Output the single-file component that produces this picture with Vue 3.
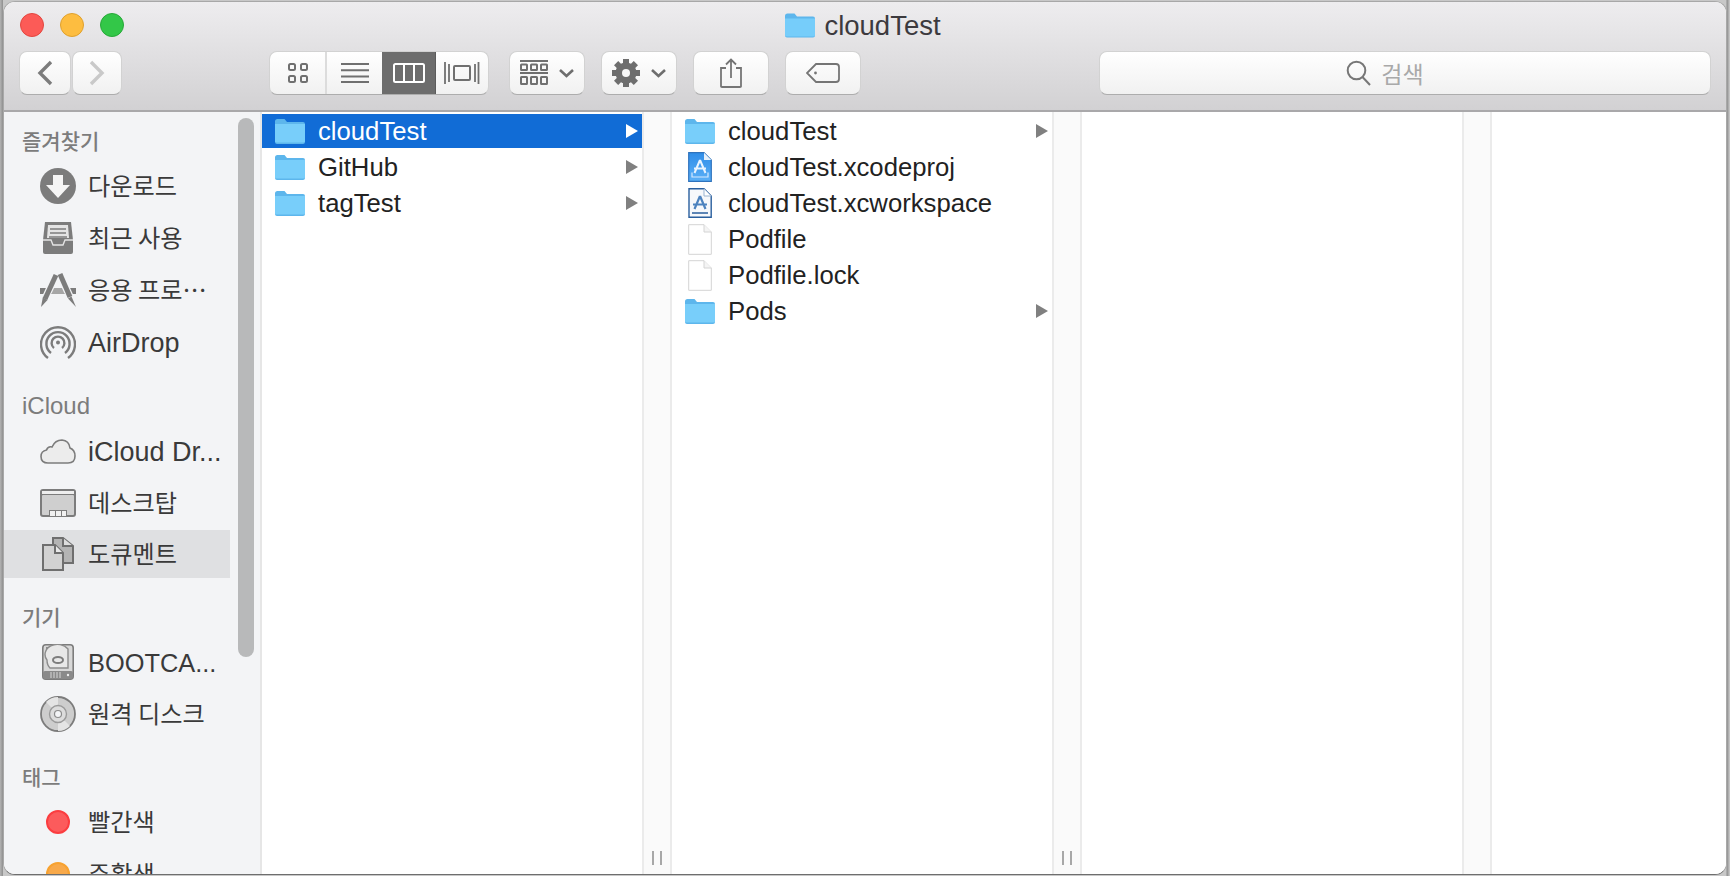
<script setup>
const sections = [
  { name: '즐겨찾기', cls: 'first', items: [
    { label: '다운로드', icon: 'download' },
    { label: '최근 사용', icon: 'recents' },
    { label: '응용 프로…', icon: 'apps' },
    { label: 'AirDrop', icon: 'airdrop' }
  ] },
  { name: 'iCloud', cls: 'cloud', items: [
    { label: 'iCloud Dr...', icon: 'cloud' },
    { label: '데스크탑', icon: 'desktop' },
    { label: '도큐멘트', icon: 'docs', active: true }
  ] },
  { name: '기기', cls: 'devices', items: [
    { label: 'BOOTCA...', icon: 'hdd', narrow: true },
    { label: '원격 디스크', icon: 'disc' }
  ] },
  { name: '태그', cls: 'tags', items: [
    { label: '빨간색', icon: 'red' },
    { label: '주황색', icon: 'orange' }
  ] }
]

const firstCol = [
  { name: 'cloudTest', icon: 'folder', more: true, selected: true },
  { name: 'GitHub', icon: 'folder', more: true },
  { name: 'tagTest', icon: 'folder', more: true }
]

const secondCol = [
  { name: 'cloudTest', icon: 'folder', more: true },
  { name: 'cloudTest.xcodeproj', icon: 'proj' },
  { name: 'cloudTest.xcworkspace', icon: 'work' },
  { name: 'Podfile', icon: 'file' },
  { name: 'Podfile.lock', icon: 'file' },
  { name: 'Pods', icon: 'folder', more: true }
]

const isKo = (s) => /[가-힣]/.test(s)
const teeth = [0, 45, 90, 135, 180, 225, 270, 315]
</script>

<template>
  <div class="desk">
    <div class="window">
      <header class="titlebar">
        <div class="title">
          <span class="lights"><i class="close"></i><i class="min"></i><i class="max"></i></span>
          <svg class="title-folder" width="30" height="25" viewBox="0 0 30 24">
            <path d="M0 2.5Q0 0 2.5 0H9.5L12 3H28Q30 3 30 5V22Q30 24 28 24H2Q0 24 0 22Z" fill="#5db6ec"/>
            <path d="M0 5H30V22Q30 23 28 23H2Q0 23 0 22Z" fill="#76cdfa"/>
          </svg>
          <span>cloudTest</span>
        </div>
        <div class="toolbar">
          <div class="nav">
            <button class="btn nav-btn back">
              <svg width="16" height="26" viewBox="0 0 16 26"><path d="M14 2L3 13L14 24" fill="none" stroke="#7c7c7c" stroke-width="3.4"/></svg>
            </button>
            <button class="btn nav-btn">
              <svg width="16" height="26" viewBox="0 0 16 26"><path d="M2 2L13 13L2 24" fill="none" stroke="#c9c9c9" stroke-width="3.4"/></svg>
            </button>
          </div>
          <div class="views btn">
            <div class="seg seg-a">
              <svg width="20" height="20" viewBox="0 0 20 20" fill="none" stroke="#707070" stroke-width="2">
                <rect x="1" y="1" width="6" height="6" rx="1.5"/><rect x="13" y="1" width="6" height="6" rx="1.5"/>
                <rect x="1" y="13" width="6" height="6" rx="1.5"/><rect x="13" y="13" width="6" height="6" rx="1.5"/>
              </svg>
            </div>
            <div class="seg seg-b">
              <svg width="28" height="20" viewBox="0 0 28 20" stroke="#707070" stroke-width="2"><path d="M0 1H28M0 7.3H28M0 13.6H28M0 19H28"/></svg>
            </div>
            <div class="seg seg-c">
              <svg width="32" height="20" viewBox="0 0 32 20" fill="none" stroke="#fff" stroke-width="2">
                <rect x="1" y="1" width="30" height="18" rx="1.5"/><path d="M11 1V19M21 1V19"/>
              </svg>
            </div>
            <div class="seg seg-d">
              <svg width="36" height="22" viewBox="0 0 36 22" fill="none" stroke="#707070" stroke-width="2">
                <rect x="10" y="4" width="16" height="14" rx="1"/>
                <path d="M1 0V22M34.500 0V22M5 2V20M31 2V20" stroke-width="1.800"/>
              </svg>
            </div>
          </div>
          <button class="btn tool">
            <svg width="28" height="26" viewBox="0 0 28 26" stroke="#707070" fill="none" stroke-width="2">
              <path d="M0 1H28M0 13H28"/>
              <rect x="1" y="4.500" width="6" height="5.500" rx=".5"/><rect x="11" y="4.500" width="6" height="5.500" rx=".5"/><rect x="21" y="4.500" width="6" height="5.500" rx=".5"/>
              <rect x="1" y="17" width="6" height="7" rx=".5"/><rect x="11" y="17" width="6" height="7" rx=".5"/><rect x="21" y="17" width="6" height="7" rx=".5"/>
            </svg>
            <svg class="chev" width="15" height="9" viewBox="0 0 15 9"><path d="M1 1L7.500 7L14 1" fill="none" stroke="#6e6e6e" stroke-width="2.600"/></svg>
          </button>
          <button class="btn tool">
            <svg width="28" height="28" viewBox="0 0 28 28">
              <g fill="#6e6e6e">
                <rect v-for="a in teeth" :key="a" x="11" y="0" width="6" height="6" :transform="`rotate(${a} 14 14)`"/>
                <circle cx="14" cy="14" r="10.500"/>
              </g>
              <circle cx="14" cy="14" r="4" fill="#f7f7f7"/>
            </svg>
            <svg class="chev" width="15" height="9" viewBox="0 0 15 9"><path d="M1 1L7.500 7L14 1" fill="none" stroke="#6e6e6e" stroke-width="2.600"/></svg>
          </button>
          <button class="btn tool">
            <svg width="24" height="30" viewBox="0 0 24 30" fill="none" stroke="#757575" stroke-width="1.800">
              <path d="M7 10H2V28.500Q2 29 3 29H21Q22 29 22 28.500V10H17"/>
              <path d="M12 20V1.500M7 6.500L12 1.500L17 6.500"/>
            </svg>
          </button>
          <button class="btn tool">
            <svg width="34" height="20" viewBox="0 0 34 20" fill="none" stroke="#757575" stroke-width="1.800">
              <path d="M10 1H30Q33 1 33 4V16Q33 19 30 19H10L1 10Z"/>
              <circle cx="9.500" cy="10" r="1.400" fill="#757575" stroke="none"/>
            </svg>
          </button>
          <div class="search btn">
            <svg width="26" height="26" viewBox="0 0 26 26" fill="none" stroke="#777" stroke-width="2">
              <circle cx="10.500" cy="10.500" r="8.800"/><path d="M16.500 17L24 25"/>
            </svg>
            <span>검색</span>
          </div>
        </div>
      </header>

      <div class="body">
        <aside class="sidebar">
          <div v-for="sec in sections" :key="sec.name" class="sec" :class="sec.cls">
            <div class="sec-name" :class="{ ko: isKo(sec.name) }">{{ sec.name }}</div>
            <div v-for="it in sec.items" :key="it.label" class="side-row" :class="{ active: it.active }">
              <span class="side-icon">
                <svg v-if="it.icon === 'download'" width="36" height="36" viewBox="0 0 36 36">
                  <circle cx="18" cy="18" r="18" fill="#7c7c7c"/>
                  <path d="M13 7H23V17H30L18 30L6 17H13Z" fill="#f5f5f5"/>
                </svg>
                <svg v-else-if="it.icon === 'recents'" width="32" height="32" viewBox="0 0 32 32">
                  <path d="M3 0H29L31 18V30Q31 32 29 32H3Q1 32 1 30V18Z" fill="#7c7c7c"/>
                  <path d="M6 3H26L27 16H5Z" fill="#e4e4e4"/>
                  <path d="M8 7H24M8 11H24M7 15H25" stroke="#7c7c7c" stroke-width="1.600"/>
                  <path d="M1 18H9L11 23H21L23 18H31" fill="none" stroke="#e4e4e4" stroke-width="1.400"/>
                </svg>
                <svg v-else-if="it.icon === 'apps'" width="36" height="34" viewBox="0 0 36 34">
                  <path d="M0 15H36V21H0Z" fill="#7c7c7c"/>
                  <path d="M12 15H24V21H12Z" fill="#a6a6a6"/>
                  <path d="M16 2L4 28" stroke="#f3f4f6" stroke-width="7.500"/>
                  <path d="M20 2L32 28" stroke="#f3f4f6" stroke-width="7.500"/>
                  <path d="M16 2L5 26" stroke="#7c7c7c" stroke-width="5"/>
                  <path d="M2.800 24.500L7.500 27L1 34Z" fill="#7c7c7c"/>
                  <path d="M20 1L30 24" stroke="#7c7c7c" stroke-width="5"/>
                  <path d="M28 25.500L31.500 23.500L36 34Z" fill="#7c7c7c"/>
                </svg>
                <svg v-else-if="it.icon === 'airdrop'" width="36" height="36" viewBox="0 0 36 36" fill="none" stroke="#7c7c7c" stroke-width="2.400">
                  <path d="M8 34A17 17 0 1 1 28 34"/>
                  <path d="M11 29A11.600 11.600 0 1 1 25 29"/>
                  <path d="M14 24A6.400 6.400 0 1 1 22 24"/>
                  <circle cx="18" cy="18.500" r="2" fill="#7c7c7c" stroke="none"/>
                </svg>
                <svg v-else-if="it.icon === 'cloud'" width="36" height="25" viewBox="0 0 36 25">
                  <path d="M8 24Q1 24 1 17.500Q1 12 6.500 11Q8 7 12 8Q15 1 22 1Q29 1.500 30 9Q35 11 35 17Q35 24 28 24Z" fill="#ececec" stroke="#7c7c7c" stroke-width="1.600"/>
                </svg>
                <svg v-else-if="it.icon === 'desktop'" width="36" height="28" viewBox="0 0 36 28">
                  <rect x="0" y="0" width="36" height="28" rx="3" fill="#7c7c7c"/>
                  <rect x="2" y="2" width="32" height="3" fill="#eee"/>
                  <rect x="2" y="6" width="32" height="20" rx="1" fill="#cfcfcf"/>
                  <rect x="9" y="21" width="18" height="7" fill="#7c7c7c"/>
                  <path d="M10 22H15V27H10ZM16 22H21V27H16ZM22 22H26V27H22Z" fill="#f1f1f1"/>
                </svg>
                <svg v-else-if="it.icon === 'docs'" width="32" height="34" viewBox="0 0 32 34">
                  <path d="M11 1H21L31 9V26H11Z" fill="#b4b4b4" stroke="#6f6f6f" stroke-width="2"/>
                  <path d="M21 1V9H31" fill="#ddd" stroke="#6f6f6f" stroke-width="2"/>
                  <path d="M1 8H13L21 16V33H1Z" fill="#d2d2d2" stroke="#6f6f6f" stroke-width="2"/>
                  <path d="M13 8V16H21" fill="#e8e8e8" stroke="#6f6f6f" stroke-width="2"/>
                </svg>
                <svg v-else-if="it.icon === 'hdd'" width="32" height="36" viewBox="0 0 32 36">
                  <rect x="0.800" y="0.800" width="30.400" height="34.400" rx="3" fill="#d8d8d8" stroke="#7c7c7c" stroke-width="1.600"/>
                  <path d="M4 4H13" stroke="#7c7c7c" stroke-width="1.600"/>
                  <path d="M5 16A11 9 0 0 1 26 5V24H8Q5 21 5 16Z" fill="#e8e8e8" stroke="#8c8c8c" stroke-width="1.400"/>
                  <ellipse cx="16" cy="16" rx="5" ry="3" fill="none" stroke="#7c7c7c" stroke-width="2"/>
                  <rect x="1" y="27" width="30" height="8" rx="2" fill="#8a8a8a"/>
                  <path d="M9 28V34M12 28V34M15 28V34M18 28V34" stroke="#d8d8d8" stroke-width="1"/>
                  <circle cx="26" cy="31" r="1.200" fill="#eee"/>
                </svg>
                <svg v-else-if="it.icon === 'disc'" width="36" height="36" viewBox="0 0 36 36">
                  <circle cx="18" cy="18" r="17" fill="#cdcdcd" stroke="#7c7c7c" stroke-width="1.800"/>
                  <path d="M18 18L6 6A17 17 0 0 1 18 1ZM18 18L30 30A17 17 0 0 1 18 35Z" fill="#e4e4e4"/>
                  <circle cx="18" cy="18" r="8.500" fill="#dcdcdc" stroke="#9a9a9a" stroke-width="1.400"/>
                  <circle cx="18" cy="18" r="3.500" fill="#f3f4f6" stroke="#8c8c8c" stroke-width="1.200"/>
                </svg>
                <span v-else class="tag-dot" :class="it.icon"></span>
              </span>
              <span class="side-label" :class="{ ko: isKo(it.label), narrow: it.narrow }">{{ it.label }}</span>
            </div>
          </div>
          <div class="thumb"></div>
        </aside>

        <section class="col">
          <div v-for="f in firstCol" :key="f.name" class="row" :class="{ selected: f.selected }">
            <span class="row-icon">
              <svg width="30" height="25" viewBox="0 0 30 25">
                <path d="M0 2.500Q0 0 2.500 0H9.500L12 3H28Q30 3 30 5V23Q30 25 28 25H2Q0 25 0 23Z" fill="#5db6ec"/>
                <path d="M0 5H30V22.500Q30 23.500 28 23.500H2Q0 23.500 0 22.500Z" fill="#78cefa"/>
              </svg>
            </span>
            <span class="row-name">{{ f.name }}</span>
            <svg v-if="f.more" class="arrow" width="12" height="14" viewBox="0 0 12 14"><path d="M0 0L12 7L0 14Z"/></svg>
          </div>
        </section>
        <div class="gutter"><span class="grip"><i></i><i></i></span></div>

        <section class="col">
          <div v-for="f in secondCol" :key="f.name + f.icon" class="row">
            <span class="row-icon">
              <svg v-if="f.icon === 'folder'" width="30" height="25" viewBox="0 0 30 25">
                <path d="M0 2.500Q0 0 2.500 0H9.500L12 3H28Q30 3 30 5V23Q30 25 28 25H2Q0 25 0 23Z" fill="#5db6ec"/>
                <path d="M0 5H30V22.500Q30 23.500 28 23.500H2Q0 23.500 0 22.500Z" fill="#78cefa"/>
              </svg>
              <svg v-else-if="f.icon === 'proj'" width="24" height="30" viewBox="0 0 24 30">
                <defs>
                  <linearGradient id="projFill" x1="0" y1="0" x2="0" y2="1">
                    <stop offset="0" stop-color="#2f8de8"/>
                    <stop offset="1" stop-color="#5cb0f7"/>
                  </linearGradient>
                </defs>
                <path d="M.7 .7H16L23.300 8V29.300H.7Z" fill="url(#projFill)" stroke="#2f73bd" stroke-width="1.200"/>
                <path d="M16 .7V8H23.300Z" fill="#e6f0fa"/>
                <path d="M4 20.500V25H20V20.500" fill="none" stroke="#d5e9ff" stroke-width="1.200"/>
                <path d="M12 8L6.500 21M12 8L17.500 21M6 16.500H18" fill="none" stroke="#eaf4ff" stroke-width="2"/>
              </svg>
              <svg v-else-if="f.icon === 'work'" width="24" height="30" viewBox="0 0 24 30">
                <path d="M1 .8H16L23.200 8V29.200H1Z" fill="#f6f8fb" stroke="#2a5f9e" stroke-width="1.400"/>
                <path d="M16 .8V8H23.200" fill="#fff" stroke="#9ab4d0" stroke-width="1"/>
                <path d="M4 25H20" stroke="#2a5f9e" stroke-width="1.600"/>
                <path d="M12 8L6.500 21M12 8L17.500 21M5 16.500H19" fill="none" stroke="#4d83bf" stroke-width="2.200"/>
              </svg>
              <svg v-else width="24" height="31" viewBox="0 0 24 31">
                <path d="M.7 .7H16L23.300 8V30.300H.7Z" fill="#fff" stroke="#d4d4d4" stroke-width="1"/>
                <path d="M16 .7V8H23.300" fill="#f4f4f4" stroke="#d4d4d4" stroke-width="1"/>
              </svg>
            </span>
            <span class="row-name">{{ f.name }}</span>
            <svg v-if="f.more" class="arrow" width="12" height="14" viewBox="0 0 12 14"><path d="M0 0L12 7L0 14Z"/></svg>
          </div>
        </section>
        <div class="gutter"><span class="grip"><i></i><i></i></span></div>

        <section class="col"></section>
        <div class="gutter"></div>
        <section class="col last"></section>
      </div>
    </div>
  </div>
</template>

<style>
html, body { margin: 0; background: #c8c8c8; overflow: hidden; }
</style>

<style scoped>
.desk {
  width: 1730px;
  height: 876px;
  padding: 1px 3px 0 3px;
  box-sizing: border-box;
  background: linear-gradient(90deg, #b4b4b4 0, #8f8f8f 3px, #c8c8c8 3px, #c8c8c8 1726px, #8f8f8f 1727px, #cfcfcf 1730px);
  font-family: "Liberation Sans", "Noto Sans CJK KR", sans-serif;
}
.window {
  height: 874px;
  box-sizing: border-box;
  border: 1px solid #a8a8a8;
  border-bottom-color: #6e6e6e;
  border-radius: 12px;
  overflow: hidden;
  display: flex;
  flex-direction: column;
  background: #fff;
}
.titlebar {
  height: 110px;
  flex: none;
  box-sizing: border-box;
  background: linear-gradient(#eeedef, #d2d1d3);
  border-bottom: 2px solid #a9a8aa;
  display: flex;
  flex-direction: column;
}
.title {
  height: 49px;
  padding: 0 4px 2px 0;
  box-sizing: border-box;
  flex: none;
  display: flex;
  align-items: center;
  justify-content: center;
  gap: 9px;
  font-size: 27.5px;
  color: #3c3a3e;
  position: relative;
}
.lights {
  position: absolute;
  left: 16px;
  top: 11px;
  display: flex;
  gap: 16px;
}
.lights i {
  display: block;
  width: 24px;
  height: 24px;
  box-sizing: border-box;
  border-radius: 50%;
  border: 1px solid;
}
.lights .close { background: #fc5b57; border-color: #e2463f; }
.lights .min { background: #fdbd40; border-color: #dfa02d; }
.lights .max { background: #33c748; border-color: #27a838; }
.toolbar {
  display: flex;
  align-items: stretch;
  height: 44px;
  padding: 0 15px;
}
.btn {
  box-sizing: border-box;
  background: linear-gradient(#ffffff, #f1f1f1);
  border: 1px solid #d2d2d2;
  border-bottom-color: #adadad;
  border-radius: 8px;
  padding: 0;
  display: flex;
  align-items: center;
  justify-content: center;
}
.nav { display: flex; gap: 1px; margin-right: 147px; }
.nav-btn { width: 50px; }
.nav-btn.back { width: 52px; }
.views {
  width: 220px;
  margin-right: 20px;
  overflow: hidden;
  align-items: stretch;
}
.seg { display: flex; align-items: center; justify-content: center; }
.seg-a { width: 57px; border-right: 2px solid #dcdcdc; box-sizing: border-box; }
.seg-b { width: 55px; }
.seg-c { width: 54px; background: #6d6d6d; border-right: 1px solid #5c5c5c; box-sizing: border-box; margin: -1px 0; }
.seg-d { flex: 1; }
.tool { width: 76px; margin-right: 16px; gap: 11px; }
.search {
  width: 612px;
  margin-left: auto;
  padding-right: 40px;
  gap: 9px;
  font-size: 23px;
  color: #a9a9a9;
}
.body {
  flex: 1;
  min-height: 0;
  display: flex;
}
.sidebar {
  width: 258px;
  flex: none;
  box-sizing: border-box;
  padding-top: 8px;
  background: #f3f4f6;
  border-right: 2px solid #e6e6e6;
  position: relative;
  overflow: hidden;
}
.sec { width: 226px; margin-top: 16px; }
.sec.first { margin-top: 0; }
.sec.cloud { margin-top: 17px; }
.sec.devices { margin-top: 18px; }
.sec-name {
  height: 40px;
  line-height: 41px;
  padding-left: 18px;
  font-size: 24px;
  color: #7c7c7c;
}
.sec-name.ko {
  font-family: "Noto Sans CJK KR", sans-serif;
  font-size: 21px;
  font-weight: 500;
}
.side-row {
  height: 52px;
  display: flex;
  align-items: center;
  padding-left: 36px;
  box-sizing: border-box;
  color: #3a3a3a;
}
.side-row.active {
  height: 48px;
  margin: 1px 0 3px;
  background: #dfe0e2;
}
.side-icon {
  width: 36px;
  height: 36px;
  flex: none;
  display: flex;
  align-items: center;
  justify-content: center;
  margin-right: 12px;
}
.side-label { font-size: 27px; white-space: nowrap; margin-top: 2px; }
.side-label.narrow { font-size: 25.4px; }
.side-label.ko {
  font-family: "Noto Sans CJK KR", sans-serif;
  font-size: 24.2px;
  margin-top: 0;
  margin-bottom: 3px;
}
.tag-dot {
  width: 24px;
  height: 24px;
  border-radius: 50%;
  box-sizing: border-box;
  border: 2px solid;
}
.tag-dot.red { background: #fc5b5c; border-color: #fb3d40; }
.tag-dot.orange { background: #f8a94a; border-color: #f7a230; }
.thumb {
  position: absolute;
  left: 234px;
  top: 6px;
  width: 16px;
  height: 539px;
  border-radius: 8px;
  background: #b8b9ba;
}
.col {
  width: 380px;
  flex: none;
  box-sizing: border-box;
  padding-top: 2px;
  background: #fff;
}
.col.last { flex: 1; }
.gutter {
  width: 30px;
  flex: none;
  box-sizing: border-box;
  background: #fafafa;
  border-left: 2px solid #ebebeb;
  border-right: 2px solid #ebebeb;
  display: flex;
  align-items: flex-end;
  justify-content: center;
  padding-bottom: 9px;
}
.grip { display: flex; gap: 6px; }
.grip i { display: block; width: 2px; height: 14px; background: #a8a8a8; }
.row {
  height: 34px;
  margin-bottom: 2px;
  padding: 0 4px 0 13px;
  display: flex;
  align-items: center;
  font-size: 25.7px;
  color: #222;
}
.row-icon {
  width: 30px;
  margin-right: 13px;
  flex: none;
  display: flex;
  justify-content: center;
}
.row-name { flex: 1; white-space: nowrap; }
.arrow { fill: #808080; flex: none; }
.row.selected { background: #116cd6; color: #fff; }
.row.selected .arrow { fill: #fff; }
</style>
